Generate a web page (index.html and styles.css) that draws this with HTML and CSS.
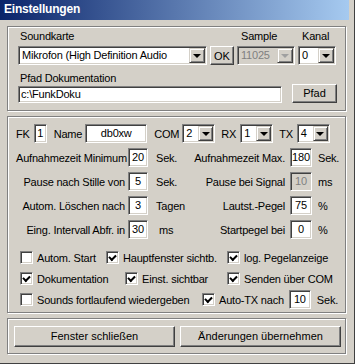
FILE: index.html
```html
<!DOCTYPE html>
<html lang="de">
<head>
    <meta charset="UTF-8">
    <title>Einstellungen</title>
    <link rel="stylesheet" href="styles.css">
</head>
<body>
    <div class="window">
        <div class="titlebar">Einstellungen</div>

        <div class="panel sound">
            <div class="sound-grid">
                <span class="lbl first">Soundkarte</span>
                <span></span>
                <span class="lbl">Sample</span>
                <span class="lbl">Kanal</span>

                <div class="combo"><span class="val">Mikrofon (High Definition Audio</span><span class="arrow"></span></div>
                <button class="btn">OK</button>
                <div class="combo disabled"><span class="val">11025</span><span class="arrow"></span></div>
                <div class="combo"><span class="val">0</span><span class="arrow"></span></div>
            </div>
            <div class="lbl first path-lbl">Pfad Dokumentation</div>
            <div class="path-row">
                <div class="field path-field">c:\FunkDoku</div>
                <button class="btn path-btn">Pfad</button>
            </div>
        </div>

        <div class="panel options">
            <div class="top-row">
                <span>FK</span>
                <div class="field num fk">1</div>
                <span class="name-lbl">Name</span>
                <div class="field name">db0xw</div>
                <span class="com-lbl">COM</span>
                <div class="combo small"><span class="val">2</span><span class="arrow"></span></div>
                <span class="rx-lbl">RX</span>
                <div class="combo small"><span class="val">1</span><span class="arrow"></span></div>
                <span class="tx-lbl">TX</span>
                <div class="combo small"><span class="val">4</span><span class="arrow"></span></div>
            </div>

            <div class="form-grid">
                <span class="l">Aufnahmezeit Minimum</span>
                <div class="field num">20</div>
                <span class="u">Sek.</span>
                <span class="r">Aufnahmezeit Max.</span>
                <div class="field num">180</div>
                <span class="u2">Sek.</span>

                <span class="l">Pause nach Stille von</span>
                <div class="field num">5</div>
                <span class="u">Sek.</span>
                <span class="r">Pause bei Signal</span>
                <div class="field num disabled">10</div>
                <span class="u2">ms</span>

                <span class="l">Autom. Löschen nach</span>
                <div class="field num">3</div>
                <span class="u">Tagen</span>
                <span class="r">Lautst.-Pegel</span>
                <div class="field num">75</div>
                <span class="u2">%</span>

                <span class="l">Eing. Intervall Abfr. in</span>
                <div class="field num">30</div>
                <span class="u ms">ms</span>
                <span class="r">Startpegel bei</span>
                <div class="field num">0</div>
                <span class="u2">%</span>
            </div>

            <div class="checks">
                <div class="check-row">
                    <label class="chk c1"><span class="box"></span>Autom. Start</label>
                    <label class="chk c2"><span class="box on"></span>Hauptfenster sichtb.</label>
                    <label class="chk c3"><span class="box on"></span>log. Pegelanzeige</label>
                </div>
                <div class="check-row">
                    <label class="chk c1 doc"><span class="box on"></span>Dokumentation</label>
                    <label class="chk c2 einst"><span class="box on"></span>Einst. sichtbar</label>
                    <label class="chk c3"><span class="box on"></span>Senden über COM</label>
                </div>
                <div class="check-row">
                    <label class="chk c1 sounds"><span class="box"></span>Sounds fortlaufend wiedergeben</label>
                    <label class="chk autotx"><span class="box on"></span>Auto-TX nach</label>
                    <div class="field num">10</div>
                    <span class="u2">Sek.</span>
                </div>
            </div>
        </div>

        <div class="panel buttons">
            <button class="btn wide">Fenster schließen</button>
            <button class="btn wide">Änderungen übernehmen</button>
        </div>
    </div>
</body>
</html>
```

FILE: styles.css
```css
body {
    margin: 0;
    background: #d4d0c8;
    font-family: "Liberation Sans", Arial, sans-serif;
    font-size: 11px;
    letter-spacing: -0.2px;
    color: #000;
}
.window {
    width: 355px;
    height: 364px;
    box-sizing: border-box;
    background: #d4d0c8;
    border-right: 1px solid #404040;
    border-bottom: 1px solid #404040;
    padding: 0 5px 0 0;
}
.titlebar {
    height: 20px;
    line-height: 19px;
    padding-left: 4px;
    margin-bottom: 6px;
    color: #fff;
    font-weight: bold;
    font-size: 12px;
    letter-spacing: -0.2px;
    background: linear-gradient(to right, #0a246a, #a6caf0);
}

/* etched frame */
.panel {
    margin-left: 7px;
    border: 1px solid #808080;
    box-shadow: inset 1px 1px 0 #fff, 1px 1px 0 #fff;
    box-sizing: border-box;
    width: 339px;
}

/* sunken edit field */
.field {
    background: #fff;
    border: 1px solid;
    border-color: #808080 #fff #fff #808080;
    box-shadow: inset 1px 1px 0 #404040, inset -1px -1px 0 #d4d0c8;
    box-sizing: border-box;
    height: 19px;
    line-height: 17px;
    padding: 0 4px;
    white-space: nowrap;
    overflow: hidden;
}
.field.disabled {
    background: #d4d0c8;
    color: #808080;
}
.field.num {
    width: 21px;
    padding: 0;
    text-align: center;
}

.btn {
    font: inherit;
    color: #000;
    background: #d4d0c8;
    border: 1px solid;
    border-color: #fff #404040 #404040 #fff;
    box-shadow: inset -1px -1px 0 #808080, inset 1px 1px 0 #d4d0c8;
    padding: 0;
    height: 20px;
}

/* combo box */
.combo {
    display: flex;
    align-items: stretch;
    height: 19px;
    box-sizing: border-box;
    background: #fff;
    border: 1px solid;
    border-color: #808080 #fff #fff #808080;
    box-shadow: inset 1px 1px 0 #404040, inset -1px -1px 0 #d4d0c8;
    padding: 1px;
}
.combo .val {
    flex: 1;
    line-height: 15px;
    padding-left: 2px;
    white-space: nowrap;
    overflow: hidden;
}
.combo .arrow {
    width: 16px;
    box-sizing: border-box;
    background: #d4d0c8;
    border: 1px solid;
    border-color: #d4d0c8 #404040 #404040 #d4d0c8;
    box-shadow: inset 1px 1px 0 #fff, inset -1px -1px 0 #808080;
    display: flex;
    align-items: center;
    justify-content: center;
}
.combo .arrow::after {
    content: "";
    border-left: 4px solid transparent;
    border-right: 4px solid transparent;
    border-top: 4px solid #000;
    margin-top: 1px;
}
.combo.disabled {
    background: #d4d0c8;
    color: #808080;
}
.combo.disabled .arrow::after {
    border-top-color: #a0a0a0;
}

/* sound card panel */
.sound {
    height: 85px;
    padding: 2px 0 0 10px;
}
.sound-grid {
    display: grid;
    grid-template-columns: 189px 24px 58px 38px;
    grid-template-rows: 15px 19px;
    column-gap: 3px;
    row-gap: 2px;
    align-items: center;
}
.lbl {
    padding-left: 4px;
    line-height: 15px;
}
.lbl.first {
    padding-left: 2px;
}
.sound .btn {
    height: 19px;
}
.path-lbl {
    margin-top: 6px;
}
.path-row {
    display: flex;
    align-items: center;
}
.path-field {
    width: 264px;
    height: 17px;
    line-height: 15px;
    padding-left: 2px;
}
.path-btn {
    width: 45px;
    height: 21px;
    margin-left: 10px;
    margin-top: -3px;
}

/* options panel */
.options {
    height: 197px;
    margin-top: 5px;
    padding: 7px 0 0 8px;
}
.top-row {
    display: flex;
    align-items: center;
    height: 19px;
}
.top-row .fk {
    width: 13px;
    margin-left: 4px;
}
.name-lbl {
    margin-left: 7px;
}
.top-row .name {
    width: 62px;
    margin-left: 3px;
    text-align: center;
}
.com-lbl {
    margin-left: 7px;
}
.rx-lbl,
.tx-lbl {
    margin-left: 6px;
    margin-right: 1px;
}
.top-row .combo {
    width: 33px;
    margin-left: 3px;
}
.top-row .combo .arrow {
    width: 15px;
}

.form-grid {
    display: grid;
    grid-template-columns: 112px 20px 1fr auto 22px 31px;
    grid-auto-rows: 19px;
    row-gap: 5px;
    align-items: center;
    margin-top: 5px;
    margin-right: 2px;
}
.form-grid .l {
    text-align: right;
    padding-right: 3px;
    white-space: nowrap;
}
.form-grid .u {
    padding-left: 8px;
}
.form-grid .u.ms {
    padding-left: 11px;
}
.form-grid .r {
    text-align: right;
    padding-right: 5px;
}
.form-grid .field.num {
    width: 100%;
}
.u2 {
    padding-left: 6px;
}

.checks {
    margin-top: 8px;
}
.check-row {
    display: flex;
    align-items: center;
    height: 21px;
}
.chk {
    display: flex;
    align-items: center;
    white-space: nowrap;
}
.chk .box {
    width: 13px;
    height: 13px;
    box-sizing: border-box;
    background: #fff;
    border: 1px solid;
    border-color: #808080 #fff #fff #808080;
    box-shadow: inset 1px 1px 0 #404040, inset -1px -1px 0 #d4d0c8;
    margin-right: 4px;
    position: relative;
}
.chk .box.on::after {
    content: "";
    position: absolute;
    left: 2px;
    top: 1px;
    width: 5px;
    height: 3px;
    border-left: 2px solid #000;
    border-bottom: 2px solid #000;
    transform: rotate(-45deg) translate(-1px, 1px);
}
.c1 {
    margin-left: 4px;
    width: 86px;
}
.c2 {
    width: 121px;
}
.doc {
    width: 105px;
}
.einst {
    width: 102px;
}
.sounds {
    width: 182px;
}
.autotx {
    margin-right: 5px;
}
.check-row .field.num {
    width: 22px;
}

/* button panel */
.buttons {
    height: 36px;
    margin-top: 5px;
    display: flex;
    align-items: center;
    gap: 5px;
    padding-left: 6px;
}
.btn.wide {
    width: 161px;
    height: 21px;
}
```
